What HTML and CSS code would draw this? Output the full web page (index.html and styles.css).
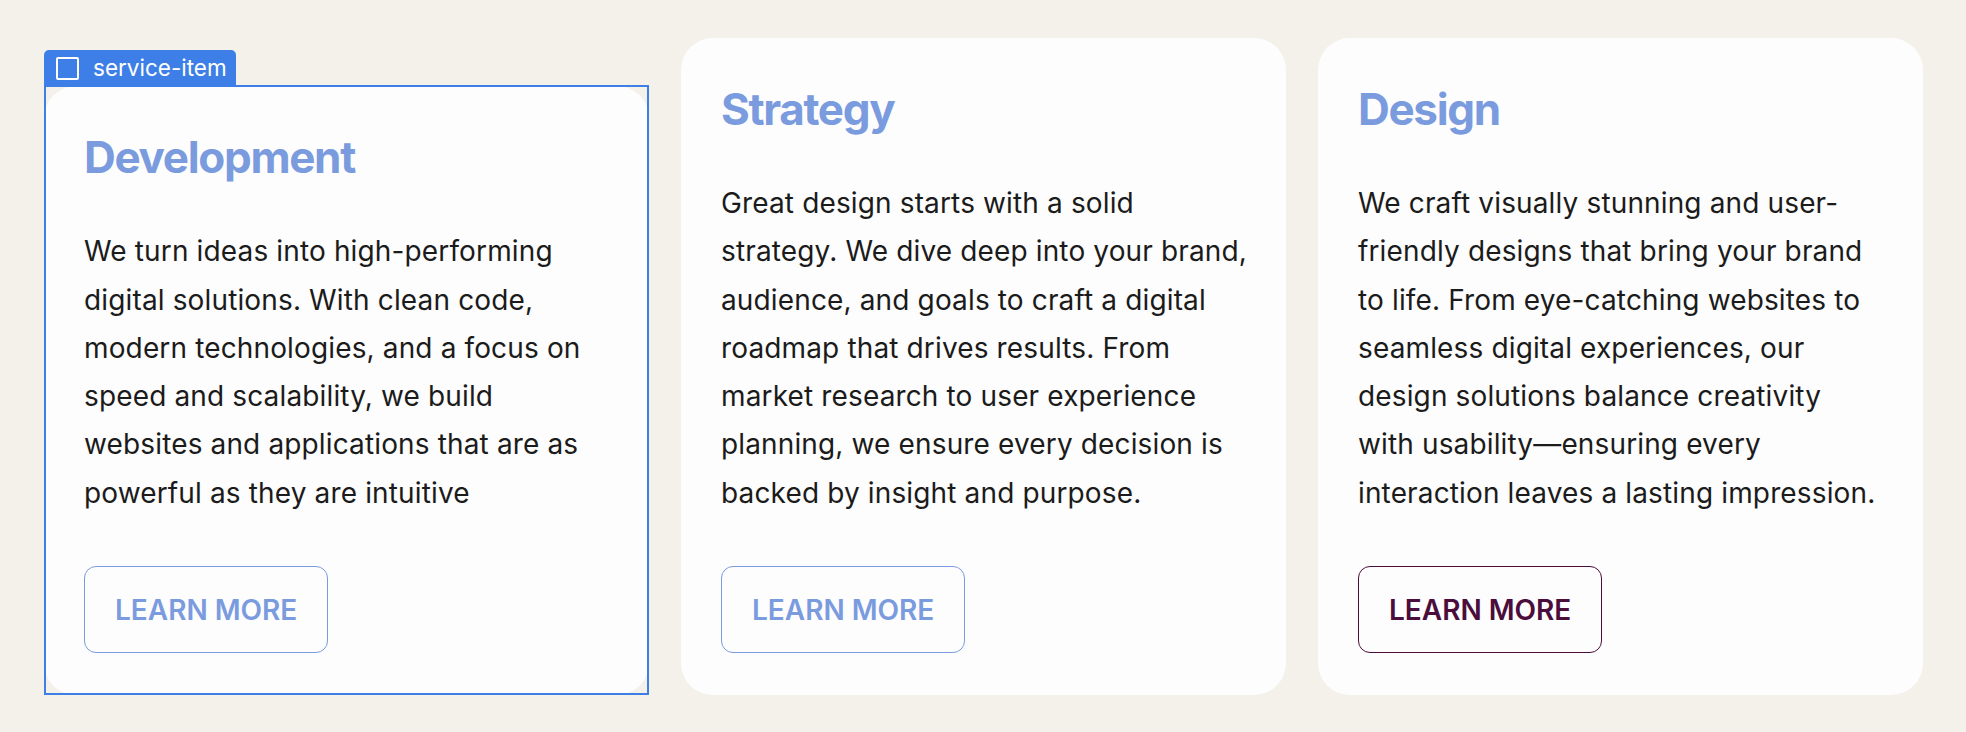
FILE: index.html
```html
<!DOCTYPE html>
<html lang="en">
<head>
<meta charset="utf-8">
<title>Services</title>
<link rel="stylesheet" href="styles.css">
</head>
<body>
<section class="services">
  <article class="card card--selected">
    <div class="sel-tab">
      <span class="sel-icon"></span>
      <span class="sel-name">service-item</span>
    </div>
    <div class="sel-frame"></div>
    <h3 class="card-title">Development</h3>
    <p class="card-text">We turn ideas into high-performing<br>digital solutions. With clean code,<br>modern technologies, and a focus on<br>speed and scalability, we build<br>websites and applications that are as<br>powerful as they are intuitive</p>
    <a class="btn" href="#">LEARN MORE</a>
  </article>
  <article class="card">
    <h3 class="card-title">Strategy</h3>
    <p class="card-text">Great design starts with a solid<br>strategy. We dive deep into your brand,<br>audience, and goals to craft a digital<br>roadmap that drives results. From<br>market research to user experience<br>planning, we ensure every decision is<br>backed by insight and purpose.</p>
    <a class="btn" href="#">LEARN MORE</a>
  </article>
  <article class="card">
    <h3 class="card-title">Design</h3>
    <p class="card-text">We craft visually stunning and user-<br>friendly designs that bring your brand<br>to life. From eye-catching websites to<br>seamless digital experiences, our<br>design solutions balance creativity<br>with usability—ensuring every<br>interaction leaves a lasting impression.</p>
    <a class="btn btn--active" href="#">LEARN MORE</a>
  </article>
</section>
</body>
</html>
```
FILE: styles.css
```css
* { box-sizing: border-box; }

html, body {
  margin: 0;
  padding: 0;
}

body {
  background: #f4f1ea;
  font-family: Inter, "Liberation Sans", sans-serif;
  color: #1b1b1b;
}

.services {
  display: flex;
  align-items: flex-end;
  gap: 32px;
  padding: 38px 43px 39px 44px;
}

.card {
  flex: 1 1 0;
  min-width: 0;
  background: #fdfdfd;
  border-radius: 32px;
  padding: 40px 40px 42px;
  display: flex;
  flex-direction: column;
  align-items: flex-start;
}

.card--selected {
  position: relative;
}

.sel-frame {
  position: absolute;
  inset: -1px 0 0 0;
  border: 2px solid #3d7fe6;
  pointer-events: none;
}

.sel-tab {
  position: absolute;
  left: 0;
  bottom: 100%;
  height: 36px;
  display: flex;
  align-items: center;
  gap: 14px;
  padding: 0 9px 0 12px;
  background: #3d7fe6;
  border-radius: 5px 5px 0 0;
  color: #fff;
}

.sel-icon {
  width: 23px;
  height: 23px;
  border: 2px solid #fff;
  border-radius: 2px;
}

.sel-name {
  font-size: 22.5px;
  line-height: 1;
}

.card-title {
  margin: 4px 0 0;
  font-size: 44px;
  line-height: 55px;
  font-weight: 700;
  letter-spacing: -0.03em;
  color: #7b9bdf;
}

.card-text {
  margin: 42px 0 0;
  font-size: 28px;
  line-height: 48.3px;
  white-space: nowrap;
  letter-spacing: 0.005em;
}

.btn {
  margin-top: 49px;
  display: inline-flex;
  align-items: center;
  height: 87px;
  padding: 0 30px;
  border: 1.5px solid #7b9bdf;
  border-radius: 12px;
  color: #7b9bdf;
  font-size: 28px;
  line-height: 34px;
  font-weight: 600;
  text-decoration: none;
}

.btn--active {
  border-color: #4b0d3b;
  color: #4b0d3b;
}
```
